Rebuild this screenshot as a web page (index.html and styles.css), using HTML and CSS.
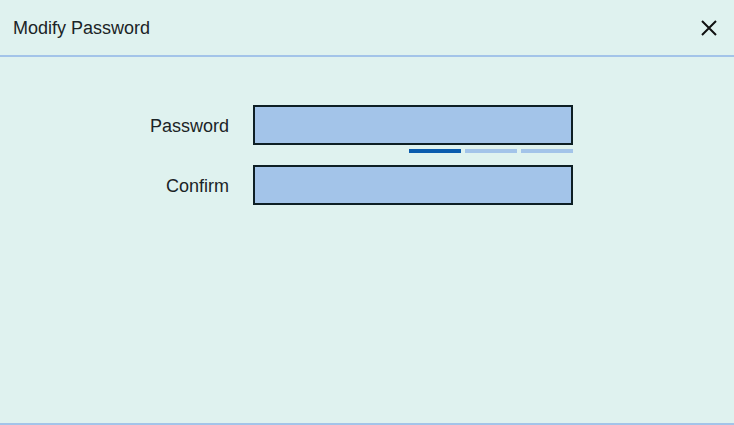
FILE: index.html
```html
<!DOCTYPE html>
<html>
<head>
<meta charset="utf-8">
<link rel="stylesheet" href="styles.css">
</head>
<body>
<div class="dialog">
  <div class="header">
    <span class="title">Modify Password</span>
    <button class="close" aria-label="Close">
      <svg width="16" height="16" viewBox="0 0 16 16"><path d="M1 1L15 15M15 1L1 15" stroke="#111" stroke-width="2" fill="none"/></svg>
    </button>
  </div>
  <div class="content">
    <div class="form">
      <label class="label">Password</label>
      <div class="field">
        <div class="input"></div>
        <div class="strength">
          <span class="bar on"></span>
          <span class="bar"></span>
          <span class="bar"></span>
        </div>
      </div>
      <label class="label">Confirm</label>
      <div class="field">
        <div class="input"></div>
      </div>
    </div>
  </div>
</div>
</body>
</html>
```
FILE: styles.css
```css
html, body {
  margin: 0;
  padding: 0;
  background: #dff2ef;
}
body {
  font-family: "Liberation Sans", Arial, sans-serif;
  color: #1b2426;
}
.dialog {
  width: 734px;
  height: 425px;
  display: flex;
  flex-direction: column;
  box-sizing: border-box;
  border-bottom: 2px solid #a3c4e9;
}
.header {
  height: 55px;
  border-bottom: 2px solid #a3c4e9;
  display: flex;
  align-items: center;
  justify-content: space-between;
  padding: 0 17px 0 13px;
}
.title {
  font-size: 18px;
  line-height: 22px;
}
.close {
  border: 0;
  background: none;
  padding: 0;
  width: 16px;
  height: 16px;
  display: flex;
}
.content {
  flex: 1;
  padding-top: 48px;
}
.form {
  display: grid;
  grid-template-columns: 229px 320px;
  column-gap: 24px;
  row-gap: 12px;
  align-items: start;
}
.label {
  text-align: right;
  font-size: 18px;
  line-height: 40px;
  padding-top: 1px;
}
.field {
  display: flex;
  flex-direction: column;
}
.input {
  height: 40px;
  box-sizing: border-box;
  border: 2px solid #0d1f24;
  background: #a3c4e9;
}
.strength {
  display: flex;
  justify-content: flex-end;
  gap: 4px;
  margin-top: 4px;
}
.bar {
  width: 52px;
  height: 4px;
  background: #a3c4e9;
}
.bar.on {
  background: #0b5cad;
}
```
